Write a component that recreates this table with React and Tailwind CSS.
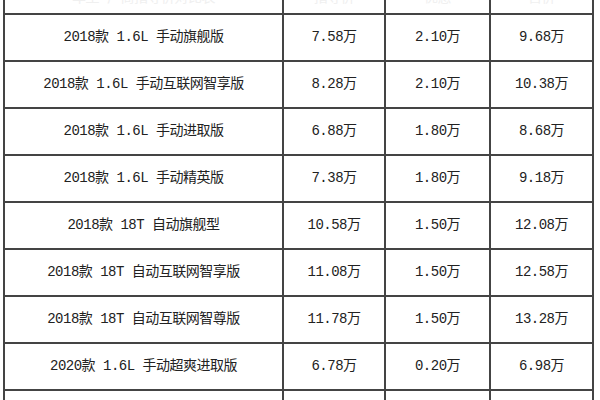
const rows = [
  ['2018款 1.6L 手动旗舰版', '7.58万', '2.10万', '9.68万'],
  ['2018款 1.6L 手动互联网智享版', '8.28万', '2.10万', '10.38万'],
  ['2018款 1.6L 手动进取版', '6.88万', '1.80万', '8.68万'],
  ['2018款 1.6L 手动精英版', '7.38万', '1.80万', '9.18万'],
  ['2018款 18T 自动旗舰型', '10.58万', '1.50万', '12.08万'],
  ['2018款 18T 自动互联网智享版', '11.08万', '1.50万', '12.58万'],
  ['2018款 18T 自动互联网智尊版', '11.78万', '1.50万', '13.28万'],
  ['2020款 1.6L 手动超爽进取版', '6.78万', '0.20万', '6.98万'],
];

export default function App() {
  return (
    <div className="h-[400px] w-[600px] overflow-hidden bg-white pl-[3px]">
      <table className="-mt-[34px] w-[591px] table-fixed border-separate border-spacing-0 border border-[#444] font-['Liberation_Mono','Noto_Sans_CJK_SC',monospace] text-[14px] tracking-[-0.5px] text-[#222]">
        <colgroup>
          <col className="w-[279px]" />
          <col className="w-[102px]" />
          <col className="w-[105px]" />
          <col className="w-[103px]" />
        </colgroup>
        <tbody>
          {/* faded header row, cut off at the top */}
          <tr className="h-[47px]">
            <td className="border border-[#444] p-0 pb-[4px] text-center align-bottom text-[#f0f0f0]">车型 厂商指导价对比表</td>
            <td className="border border-[#444] p-0 pb-[4px] text-center align-bottom text-[#f0f0f0]">指导价</td>
            <td className="border border-[#444] p-0 pb-[4px] text-center align-bottom text-[#f0f0f0]">优惠</td>
            <td className="border border-[#444] p-0 pb-[4px] text-center align-bottom text-[#f0f0f0]">售价</td>
          </tr>
          {rows.map((r) => (
            <tr key={r[0]} className="h-[47px]">
              {r.map((c, i) => (
                <td key={i} className="border border-[#444] p-0 text-center align-middle">
                  {c}
                </td>
              ))}
            </tr>
          ))}
          <tr className="h-[47px]">
            <td className="border border-[#444] p-0"></td>
            <td className="border border-[#444] p-0"></td>
            <td className="border border-[#444] p-0"></td>
            <td className="border border-[#444] p-0"></td>
          </tr>
        </tbody>
      </table>
    </div>
  );
}
